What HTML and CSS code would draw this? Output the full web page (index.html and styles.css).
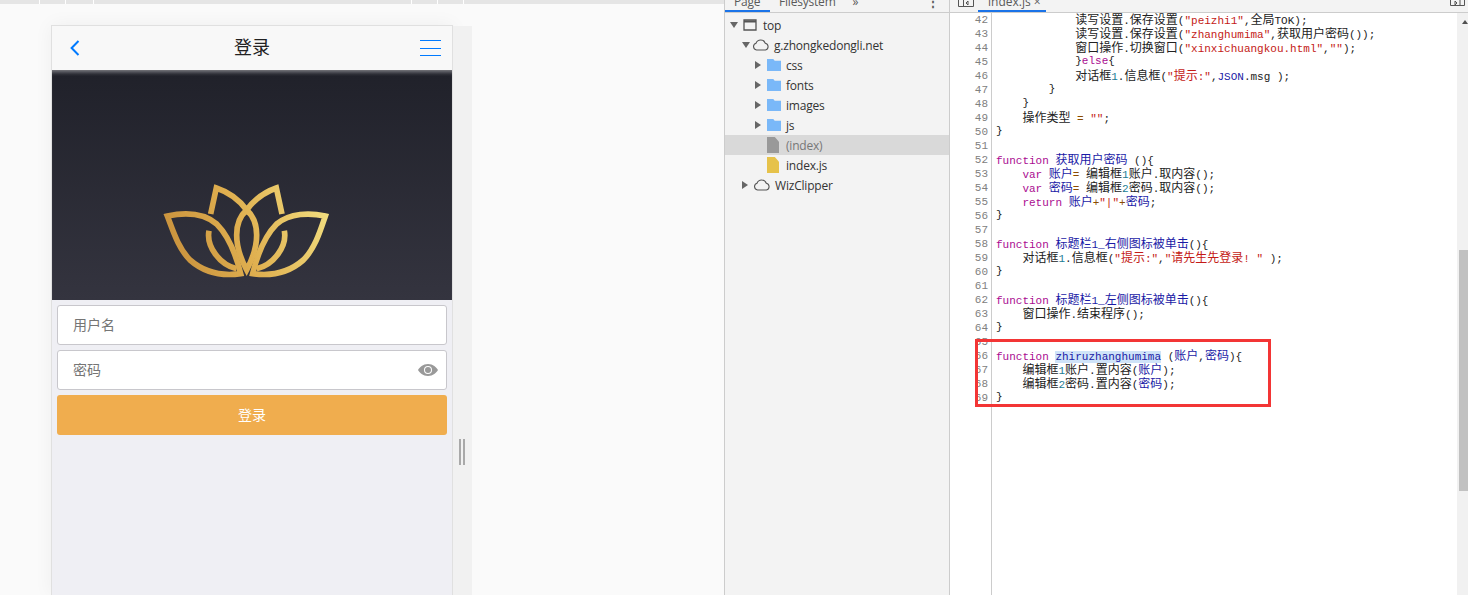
FILE: index.html
```html
<!DOCTYPE html>
<html lang="zh-CN">
<head>
  <meta charset="UTF-8">
  <title>登录</title>
  <link rel="stylesheet" href="styles.css">
</head>
<body>
  <!-- Device preview -->
  <section class="preview">
    <div class="ruler"></div>
    <div class="stage">
      <div class="phone">
        <header class="titlebar">
          <svg class="back" width="10" height="16" viewBox="0 0 10 16"><path d="M8.5 1 L1.6 8 L8.5 15" fill="none" stroke="#007aff" stroke-width="2"/></svg>
          <h1>登录</h1>
          <div class="menu"><span></span><span></span><span></span></div>
        </header>
        <div class="hero">
          <svg class="lotus" width="210" height="130" viewBox="0 0 630 390">
            <defs>
              <linearGradient id="gold" gradientUnits="userSpaceOnUse" x1="70" y1="300" x2="570" y2="120">
                <stop offset="0" stop-color="#c58d3a"/>
                <stop offset="0.5" stop-color="#e0b050"/>
                <stop offset="1" stop-color="#f2df80"/>
              </linearGradient>
            </defs>
            <g fill="none" stroke="url(#gold)" stroke-width="17" stroke-linejoin="miter">
              <path d="M82 138 C130 128 190 128 230 162 C265 197 288 255 302 311 C240 320 190 305 150 270 C115 235 99 182 82 138 Z"/>
              <path d="M556 138 C510 128 450 128 410 162 C375 197 352 255 338 311 C400 320 450 305 490 270 C525 235 541 182 556 138 Z"/>
              <path d="M212 132 L229 54 C268 67 298 90 320 120 C342 90 372 67 409 54 L426 132"/>
              <path d="M320 120 C280 155 280 225 320 300 C360 225 360 155 320 120 Z"/>
              <path d="M207 182 C198 230 240 285 290 296"/>
              <path d="M433 182 C442 230 400 285 350 296"/>
            </g>
          </svg>
        </div>
        <form class="login">
          <div class="field"><span>用户名</span></div>
          <div class="field">
            <span>密码</span>
            <svg class="eye" width="20" height="12" viewBox="0 0 20 12"><path fill-rule="evenodd" d="M10 0 C15 0 18.500 3.500 20 6 C18.500 8.500 15 12 10 12 C5 12 1.500 8.500 0 6 C1.500 3.500 5 0 10 0 Z M10 2 A4 4 0 1 0 10 10 A4 4 0 1 0 10 2 Z M10 3 A3 3 0 1 1 10 9 A3 3 0 1 1 10 3 Z" fill="#999"/></svg>
          </div>
          <button class="submit" type="button">登录</button>
        </form>
      </div>
      <div class="resizer"><div class="grip"></div></div>
    </div>
  </section>

  <!-- Sources navigator -->
  <aside class="navigator">
    <div class="tabs">
      <span class="tab active">Page</span>
      <span class="tab">Filesystem</span>
      <span class="tab more">»</span>
      <span class="tab dots">⋮</span>
    </div>
    <ul class="tree">
      <li class="row depth0">
        <i class="arrow down"></i>
        <svg class="ico" width="14" height="14" viewBox="0 0 14 14"><path d="M1 2 H13 V12 H1 Z" fill="none" stroke="#555" stroke-width="1.300"/><path d="M1 3.500 H13" stroke="#555" stroke-width="2"/></svg>
        top
      </li>
      <li class="row depth1">
        <i class="arrow down"></i>
        <svg class="ico" width="18" height="12" viewBox="0 0 18 12"><path d="M4.500 11 A3.500 3.500 0 0 1 4 4.200 A5 5 0 0 1 13.300 4.200 A3.500 3.500 0 0 1 13.500 11 Z" fill="none" stroke="#555" stroke-width="1.100"/></svg>
        g.zhongkedongli.net
      </li>
      <li class="row depth2"><i class="arrow"></i><span class="folder"></span>css</li>
      <li class="row depth2"><i class="arrow"></i><span class="folder"></span>fonts</li>
      <li class="row depth2"><i class="arrow"></i><span class="folder"></span>images</li>
      <li class="row depth2"><i class="arrow"></i><span class="folder"></span>js</li>
      <li class="row depth2 selected"><i class="arrow none"></i><span class="file"></span>(index)</li>
      <li class="row depth2"><i class="arrow none"></i><span class="file js"></span>index.js</li>
      <li class="row depth1">
        <i class="arrow"></i>
        <svg class="ico" width="18" height="12" viewBox="0 0 18 12"><path d="M4.500 11 A3.500 3.500 0 0 1 4 4.200 A5 5 0 0 1 13.300 4.200 A3.500 3.500 0 0 1 13.500 11 Z" fill="none" stroke="#555" stroke-width="1.100"/></svg>
        WizClipper
      </li>
    </ul>
  </aside>

  <!-- Code editor -->
  <main class="editor">
    <div class="tabs editor-tabs">
      <svg class="pane-btn" width="16" height="7" viewBox="0 0 16 7"><path d="M.5 0 V6.500 H15.500 V0 M5.500 0 V6.500 M10 1 L8 3 L10 5 Z" fill="none" stroke="#555"/></svg>
      <span class="tab active file-tab">index.js <b>×</b></span>
      <svg class="pane-btn right" width="15" height="6" viewBox="0 0 15 6"><path d="M.5 0 V5.500 H14.500 V0 M10 0 V5.500 M5 1 L7 3 L5 5 Z" fill="none" stroke="#555"/></svg>
    </div>
    <div class="code-area">
      <div class="code">
        <div class="line"><em>42</em><code>            <i>读写设置</i>.<i>保存设置</i>(<u class="s">"peizhi1"</u>,<i>全局</i>TOK);</code></div>
        <div class="line"><em>43</em><code>            <i>读写设置</i>.<i>保存设置</i>(<u class="s">"zhanghumima"</u>,<i>获取用户密码</i>());</code></div>
        <div class="line"><em>44</em><code>            <i>窗口操作</i>.<i>切换窗口</i>(<u class="s">"xinxichuangkou.html"</u>,<u class="s">""</u>);</code></div>
        <div class="line"><em>45</em><code>            }<u class="k">else</u>{</code></div>
        <div class="line"><em>46</em><code>            <i>对话框</i><u class="n">1</u>.<i>信息框</i>(<u class="s">"<i>提示</i>:"</u>,<u class="d">JSON</u>.msg );</code></div>
        <div class="line"><em>47</em><code>        }</code></div>
        <div class="line"><em>48</em><code>    }</code></div>
        <div class="line"><em>49</em><code>    <i>操作类型</i> <u class="o">=</u> <u class="s">""</u>;</code></div>
        <div class="line"><em>50</em><code>}</code></div>
        <div class="line"><em>51</em><code></code></div>
        <div class="line"><em>52</em><code><u class="k">function</u> <u class="d"><i>获取用户密码</i></u> (){</code></div>
        <div class="line"><em>53</em><code>    <u class="k">var</u> <u class="d"><i>账户</i></u><u class="o">=</u> <i>编辑框</i><u class="n">1</u><i>账户</i>.<i>取内容</i>();</code></div>
        <div class="line"><em>54</em><code>    <u class="k">var</u> <u class="d"><i>密码</i></u><u class="o">=</u> <i>编辑框</i><u class="n">2</u><i>密码</i>.<i>取内容</i>();</code></div>
        <div class="line"><em>55</em><code>    <u class="k">return</u> <u class="d"><i>账户</i></u><u class="o">+</u><u class="s">"|"</u><u class="o">+</u><u class="d"><i>密码</i></u>;</code></div>
        <div class="line"><em>56</em><code>}</code></div>
        <div class="line"><em>57</em><code></code></div>
        <div class="line"><em>58</em><code><u class="k">function</u> <u class="d"><i>标题栏</i>1_<i>右侧图标被单击</i></u>(){</code></div>
        <div class="line"><em>59</em><code>    <i>对话框</i><u class="n">1</u>.<i>信息框</i>(<u class="s">"<i>提示</i>:"</u>,<u class="s">"<i>请先生先登录</i>! "</u> );</code></div>
        <div class="line"><em>60</em><code>}</code></div>
        <div class="line"><em>61</em><code></code></div>
        <div class="line"><em>62</em><code><u class="k">function</u> <u class="d"><i>标题栏</i>1_<i>左侧图标被单击</i></u>(){</code></div>
        <div class="line"><em>63</em><code>    <i>窗口操作</i>.<i>结束程序</i>();</code></div>
        <div class="line"><em>64</em><code>}</code></div>
        <div class="line"><em>65</em><code></code></div>
        <div class="line"><em>66</em><code><u class="k">function</u> <u class="d mark">zhiruzhanghumima</u> (<u class="d"><i>账户</i></u>,<u class="d"><i>密码</i></u>){</code></div>
        <div class="line"><em>67</em><code>    <i>编辑框</i><u class="n">1</u><i>账户</i>.<i>置内容</i>(<u class="d"><i>账户</i></u>);</code></div>
        <div class="line"><em>68</em><code>    <i>编辑框</i><u class="n">2</u><i>密码</i>.<i>置内容</i>(<u class="d"><i>密码</i></u>);</code></div>
        <div class="line"><em>69</em><code>}</code></div>
      </div>
      <div class="scrollbar">
        <div class="scroll-up"></div>
        <div class="thumb"></div>
      </div>
      <div class="redbox"></div>
    </div>
  </main>
</body>
</html>
```

FILE: styles.css
```css
* {
  box-sizing: border-box;
}

html, body {
  margin: 0;
  height: 595px;
  overflow: hidden;
}

body {
  display: flex;
  background-color: #fff;
  font-family: "Open Sans", "Noto Sans CJK SC", sans-serif;
}

/* left: device preview */
.preview {
  width: 724px;
  flex: none;
  background-color: #fafafa;
  overflow: hidden;
}

.ruler {
  height: 4px;
  background-color: #e5e5e5;
  background-image:
    linear-gradient(#fff, #fff), linear-gradient(#fff, #fff), linear-gradient(#fff, #fff),
    linear-gradient(#fff, #fff), linear-gradient(#fff, #fff), linear-gradient(#fff, #fff);
  background-size: 1px 100%;
  background-repeat: no-repeat;
  background-position: 39px 0, 65px 0, 93px 0, 411px 0, 437px 0, 463px 0;
}

.stage {
  display: flex;
  align-items: flex-start;
  padding: 21px 0 0 51px;
  height: 591px;
}

.phone {
  width: 402px;
  height: 570px;
  background-color: #efeff4;
  border: 1px solid #e0e0e0;
  border-bottom: none;
  box-shadow: 0 0 18px rgba(0, 0, 0, 0.05);
}

.titlebar {
  height: 44px;
  background-color: #f8f8f8;
  display: grid;
  grid-template-columns: 1fr auto 1fr;
  align-items: center;
  padding: 0 11px;
}

.back {
  margin-left: 7px;
}

.titlebar h1 {
  margin: 0;
  padding-bottom: 5px;
  font-size: 18px;
  font-weight: normal;
  color: #222;
  font-family: "Noto Sans CJK SC", sans-serif;
}

.menu {
  width: 21px;
  justify-self: end;
  display: flex;
  flex-direction: column;
  gap: 6.500px;
}

.menu span {
  height: 1px;
  background-color: #007aff;
}

.hero {
  height: 230px;
  padding: 100px 0 0 88px;
  background: linear-gradient(#20212a, #34343f);
  box-shadow: inset 0 5px 4px -3px rgba(255, 255, 255, 0.45);
}

.lotus {
  display: block;
}

.login {
  padding: 5px 5px 0;
  display: flex;
  flex-direction: column;
  gap: 5px;
}

.field {
  height: 40px;
  background-color: #fff;
  border: 1px solid #c8c7cc;
  border-radius: 3px;
  padding: 0 8px 0 15px;
  display: flex;
  align-items: center;
  justify-content: space-between;
  font-size: 14px;
  color: #757575;
  font-family: "Noto Sans CJK SC", sans-serif;
}

.field span {
  padding-bottom: 2px;
}

.submit {
  height: 40px;
  padding: 0 0 2px;
  background-color: #f0ad4e;
  color: #fff;
  border: none;
  border-radius: 3px;
  font-size: 14px;
  font-family: "Noto Sans CJK SC", sans-serif;
}

.resizer {
  width: 19px;
  height: 570px;
  margin-top: 1px;
  background-color: #f1f1f1;
  padding: 413px 0 0 6px;
}

.grip {
  width: 6px;
  height: 26px;
  border-left: 2px solid #a9a9a9;
  border-right: 2px solid #a9a9a9;
}

/* middle: navigator */
.navigator {
  width: 226px;
  flex: none;
  background-color: #f3f3f3;
  border-left: 1px solid #ccc;
  border-right: 1px solid #ccc;
  letter-spacing: -0.2px;
}

.tabs {
  height: 13px;
  border-bottom: 1px solid #ccc;
  overflow: hidden;
  display: flex;
  font-size: 12px;
  color: #5a5a5a;
}

.tab {
  height: 12px;
  line-height: 3px;
  padding: 0 9px;
  white-space: nowrap;
  display: block;
}

.tab.active {
  border-bottom: 2px solid #1a73e8;
  width: 45px;
}

.tabs .more {
  padding-left: 8px;
}

.tabs .dots {
  margin-left: auto;
  padding-right: 10px;
  font-weight: bold;
}

.tree {
  list-style: none;
  margin: 2px 0 0;
  padding: 0;
  font-size: 12px;
  color: #333;
}

.row {
  height: 20px;
  display: flex;
  align-items: center;
}

.depth0 { padding-left: 5px; }
.depth1 { padding-left: 17px; }
.depth2 { padding-left: 30px; }

.arrow {
  width: 0;
  height: 0;
  border-style: solid;
  border-width: 4px 0 4px 6px;
  border-color: transparent transparent transparent #666;
  margin-right: 6px;
  flex: none;
}

.arrow.down {
  border-width: 6px 4px 0 4px;
  margin-right: 5px;
  border-color: #666 transparent transparent transparent;
}

.arrow.none {
  border-color: transparent;
}

.ico {
  margin-right: 5px;
  flex: none;
}

.depth0 .ico {
  margin-right: 6px;
}

.depth1 .ico {
  margin-left: -1px;
  margin-right: 4px;
}

.depth1 .arrow.down {
  margin-right: 3px;
}

.folder {
  width: 14px;
  height: 12px;
  margin-right: 5px;
  flex: none;
  background-color: #7ab8f8;
  clip-path: polygon(0 0, 45% 0, 55% 15%, 100% 15%, 100% 100%, 0 100%);
}

.file {
  width: 12px;
  height: 16px;
  margin-right: 7px;
  flex: none;
  background-color: #999;
  clip-path: polygon(0 0, 65% 0, 100% 30%, 100% 100%, 0 100%);
}

.file.js {
  background-color: #e6c24a;
}

.selected {
  background-color: #d9d9d9;
  color: #777;
}

/* right: code */
.editor {
  flex: 1;
  min-width: 0;
}

.editor-tabs {
  background-color: #f3f3f3;
  padding-left: 8px;
}

.pane-btn {
  flex: none;
}

.pane-btn.right {
  margin-left: auto;
  margin-right: 3px;
}

.tab.file-tab {
  width: 68px;
  margin-left: 4px;
  padding-left: 10px;
}

.file-tab b {
  font-weight: normal;
}

.code-area {
  display: flex;
  height: 582px;
  position: relative;
}

.code {
  flex: 1;
  background-image: linear-gradient(#ccc, #ccc);
  background-size: 1px 100%;
  background-position: 41px 0;
  background-repeat: no-repeat;
  font-family: "Liberation Mono", monospace;
  font-size: 11px;
  color: #222;
}

.line {
  height: 14px;
  line-height: 14px;
  display: flex;
}

.line em {
  width: 38px;
  flex: none;
  text-align: right;
  font-style: normal;
  color: #808080;
}

.line code {
  font-family: inherit;
  margin: -1px 0 0 8px;
  white-space: pre;
}

.line i {
  font-style: normal;
  font-size: 12px;
  font-family: "Noto Sans CJK SC", sans-serif;
}

.line u {
  text-decoration: none;
}

.k { color: #aa0d91; }
.s { color: #c41a16; }
.d { color: #1a1aa6; }
.n { color: #1c7c94; }
.o { color: #8a4b00; }

.mark {
  background-color: #cfe3f8;
}

.scrollbar {
  width: 11px;
  flex: none;
  background-color: #f1f1f1;
  padding-left: 2px;
}

.scroll-up {
  width: 0;
  height: 0;
  margin: 7px 0 0 3px;
  border-style: solid;
  border-width: 0 3px 4px 3px;
  border-color: transparent transparent #505050 transparent;
}

.thumb {
  height: 241px;
  margin-top: 226px;
  background-color: #c1c1c1;
}

/* red note box drawn over the code */
.redbox {
  position: absolute;
  left: 25px;
  top: 326px;
  width: 296px;
  height: 68px;
  border: 3px solid #f33535;
}
```
